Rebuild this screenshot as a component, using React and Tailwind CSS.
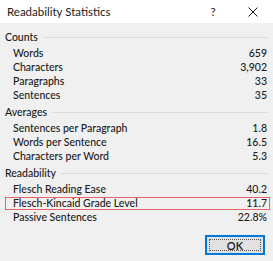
export default function App() {
  const sections = [
    {
      title: "Counts",
      rows: [
        ["Words", "659"],
        ["Characters", "3,902"],
        ["Paragraphs", "33"],
        ["Sentences", "35"],
      ],
    },
    {
      title: "Averages",
      rows: [
        ["Sentences per Paragraph", "1.8"],
        ["Words per Sentence", "16.5"],
        ["Characters per Word", "5.3"],
      ],
    },
    {
      title: "Readability",
      rows: [
        ["Flesch Reading Ease", "40.2"],
        ["Flesch-Kincaid Grade Level", "11.7", true],
        ["Passive Sentences", "22.8%"],
      ],
    },
  ];
  return (
    <div
      className="w-[273px] h-[261px] bg-[#f0f0f0] text-[#1a1a1a] overflow-hidden flex flex-col"
      style={{ fontFamily: 'Lato, "Noto Sans", sans-serif' }}
    >
      <div className="h-[23px] bg-white flex items-center pl-[7px] text-[11.5px]">
        <span className="flex-1">Readability Statistics</span>
        <span className="w-[10px] text-center mr-[30px]">?</span>
        <svg width="10" height="10" viewBox="0 0 10 10" className="mr-[15px]">
          <path d="M0.5 0.5 L9.5 9.5 M9.5 0.5 L0.5 9.5" stroke="#1a1a1a" strokeWidth="1" />
        </svg>
      </div>
      <div className="flex flex-col pt-[7px] text-[10.5px] font-medium">
        {sections.map((s, i) => (
          <div key={s.title} className={i > 0 ? "mt-[3px]" : ""}>
            <div className="h-[14px] flex items-center pl-[5px] pr-[5px]">
              <span className="leading-none">{s.title}</span>
              <div className="flex-1 h-px bg-[#dcdcdc] ml-[5px]" />
            </div>
            <div className="flex flex-col pt-[2px]">
              {s.rows.map(([label, value, hl]) => (
                <div key={label} className="h-[14px] flex items-center pl-[5px] pr-[3px]">
                  <div
                    className={
                      "flex-1 flex items-center justify-between h-[13px] pl-[7px] pr-[2px] border " +
                      (hl ? "border-[#e5646e]" : "border-transparent")
                    }
                  >
                    <span className="leading-none">{label}</span>
                    <span className="leading-none">{value}</span>
                  </div>
                </div>
              ))}
            </div>
          </div>
        ))}
      </div>
      <div className="flex justify-end pr-[8px] mt-[11px]">
        <div className="w-[60px] h-[20px] border-2 border-[#0078d7] bg-[#e1e1e1] p-[2px]">
          <div className="w-full h-full border border-dotted border-[#555] flex items-center justify-center text-[11px] font-semibold leading-none">
            OK
          </div>
        </div>
      </div>
    </div>
  );
}
